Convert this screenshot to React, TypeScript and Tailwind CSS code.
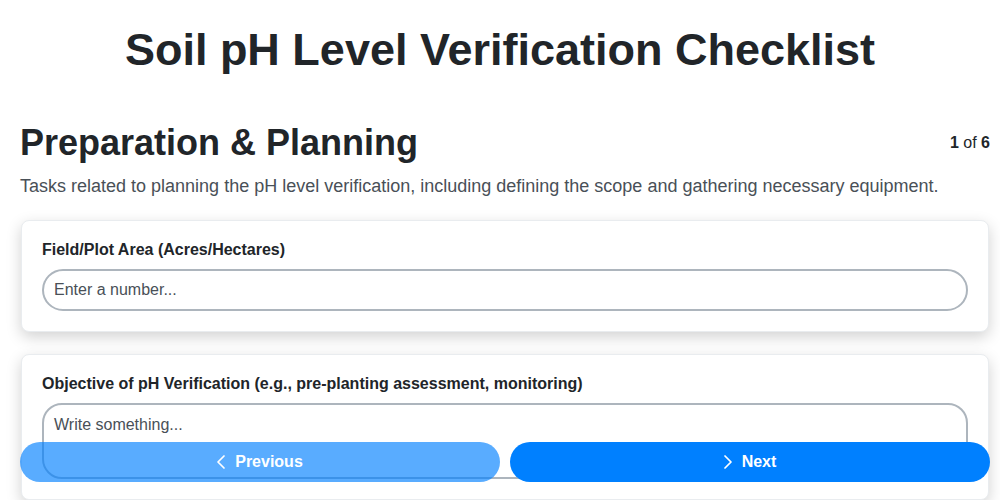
import { ChevronLeft, ChevronRight } from 'lucide-react';

export default function App() {
  return (
    <div className="h-screen overflow-hidden bg-white text-[#212529] font-['Liberation_Sans',Arial,sans-serif]">
      <h1 className="px-5 pt-[24px] text-center text-[45px] font-bold leading-[52px]">
        Soil pH Level Verification Checklist
      </h1>

      <div className="pl-5 pr-[10px]">
        <div className="mt-[45px] flex items-center justify-between">
          <h2 className="text-[36px] font-bold leading-[44px]">Preparation &amp; Planning</h2>
          <span className="text-base">
            <b>1</b> of <b>6</b>
          </span>
        </div>
        <p className="mt-[8px] text-[18px] leading-[27px] text-[#495057]">
          Tasks related to planning the pH level verification, including defining the scope and gathering necessary equipment.
        </p>

        <div className="mt-[20px] mx-px rounded-lg border border-[#e9ecef] bg-white p-5 shadow-[0_5px_15px_rgba(0,0,0,0.18)]">
          <label className="block text-base font-bold leading-[18px]">Field/Plot Area (Acres/Hectares)</label>
          <input
            type="text"
            placeholder="Enter a number..."
            className="mt-[10px] h-[42px] w-full rounded-full border-2 border-[#adb5bd] bg-white px-[10px] text-base text-[#212529] placeholder:text-[#495057] outline-none"
          />
        </div>

        <div className="mt-[22px] mx-px rounded-lg border border-[#e9ecef] bg-white p-5 shadow-[0_5px_15px_rgba(0,0,0,0.18)]">
          <label className="block text-base font-bold leading-[18px]">
            Objective of pH Verification (e.g., pre-planting assessment, monitoring)
          </label>
          <textarea
            placeholder="Write something..."
            rows={3}
            className="mt-[10px] block h-[76px] w-full resize-none rounded-[20px] border-2 border-[#adb5bd] bg-white px-[10px] py-[8px] text-base text-[#212529] placeholder:text-[#495057] outline-none"
          />
        </div>
      </div>

      <div className="fixed bottom-[18px] left-5 right-[10px] flex gap-[10px]">
        <button
          disabled
          className="flex h-10 flex-1 items-center justify-center gap-[2px] rounded-full bg-[#0080ff] pr-2 text-base font-bold text-white opacity-65"
        >
          <ChevronLeft size={24} strokeWidth={1.75} />
          Previous
        </button>
        <button className="flex h-10 flex-1 items-center justify-center gap-[2px] rounded-full bg-[#0080ff] pr-2 text-base font-bold text-white">
          <ChevronRight size={24} strokeWidth={1.75} />
          Next
        </button>
      </div>
    </div>
  );
}
